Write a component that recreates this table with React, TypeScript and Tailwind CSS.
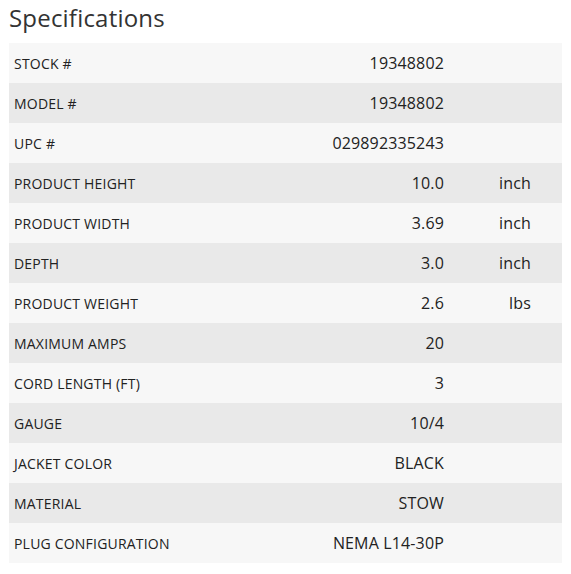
const SPECS: { label: string; value: string; unit?: string }[] = [
  { label: "STOCK #", value: "19348802" },
  { label: "MODEL #", value: "19348802" },
  { label: "UPC #", value: "029892335243" },
  { label: "PRODUCT HEIGHT", value: "10.0", unit: "inch" },
  { label: "PRODUCT WIDTH", value: "3.69", unit: "inch" },
  { label: "DEPTH", value: "3.0", unit: "inch" },
  { label: "PRODUCT WEIGHT", value: "2.6", unit: "lbs" },
  { label: "MAXIMUM AMPS", value: "20" },
  { label: "CORD LENGTH (FT)", value: "3" },
  { label: "GAUGE", value: "10/4" },
  { label: "JACKET COLOR", value: "BLACK" },
  { label: "MATERIAL", value: "STOW" },
  { label: "PLUG CONFIGURATION", value: "NEMA L14-30P" },
];

export default function App() {
  return (
    <div
      className="w-[571px] h-[574px] bg-white px-[9px] text-[#222]"
      style={{ fontFamily: '"Open Sans", sans-serif' }}
    >
      <h2 className="text-[24px] leading-[34px] pt-[1px] h-[43px] tracking-[0.2px] text-[#333]">
        Specifications
      </h2>
      <div className="w-[553px]">
        {SPECS.map((s, i) => (
          <div
            key={s.label}
            className={`flex items-center h-[40px] ${
              i % 2 === 0 ? "bg-[#f7f7f7]" : "bg-[#e9e9e9]"
            }`}
          >
            <div className="flex-1 pl-[5px] text-[14px] tracking-[0.2px]">{s.label}</div>
            <div className="text-right text-[16px] tracking-[0.15px] pr-[24px]">{s.value}</div>
            <div className="w-[94px] text-right pr-[31px] text-[16px] tracking-[0.15px]">{s.unit}</div>
          </div>
        ))}
      </div>
    </div>
  );
}
